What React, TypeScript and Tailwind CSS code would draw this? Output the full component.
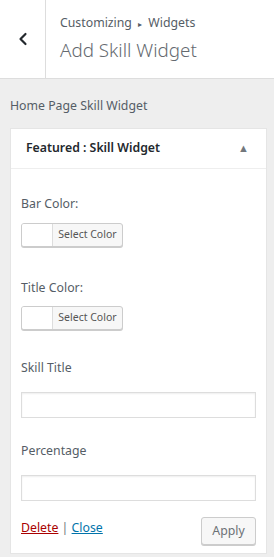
import { ChevronLeft } from "lucide-react";

function ColorButton() {
  return (
    <div className="flex h-[24px] w-[102px] rounded-[3px] border border-[#ccc] bg-[#f7f7f7] shadow-[0_1px_0_#ccc] overflow-hidden">
      <span className="w-[31px] bg-white border-r border-[#ddd]" />
      <span className="flex-1 flex items-center justify-center text-[10.5px] text-[#555]">
        Select Color
      </span>
    </div>
  );
}

export default function App() {
  return (
    <div
      className="w-[274px] h-[557px] bg-[#eee] overflow-hidden text-[#555d66]"
      style={{ fontFamily: '"Noto Sans", "Open Sans", sans-serif' }}
    >
      {/* Header */}
      <div className="h-[79px] bg-white border-b border-[#ddd] flex">
        <div className="w-[46px] border-r border-[#ddd] flex items-center justify-center">
          <ChevronLeft size={20} strokeWidth={2.6} color="#23282d" />
        </div>
        <div className="pl-[14px] pt-[14px]">
          <p className="text-[12.3px] leading-[18px]">
            Customizing <span className="text-[8px] align-middle mx-[3px]">▸</span> Widgets
          </p>
          <h1 className="text-[18.8px] font-light leading-[28px] mt-[3px] text-[#656a70]">
            Add Skill Widget
          </h1>
        </div>
      </div>

      {/* Section */}
      <div className="pl-[10px] pr-[7px] pt-[17px]">
        <p className="text-[12.3px] leading-[20px] mb-[12px]">Home Page Skill Widget</p>

        <div className="bg-white border border-[#e5e5e5]">
          <div className="h-[40px] flex items-center justify-between px-[15px] border-b border-[#eee]">
            <span className="text-[12.3px] font-semibold text-[#23282d]">
              Featured : Skill Widget
            </span>
            <span className="text-[11px] text-[#72777c] mr-[2px]">▲</span>
          </div>

          <div className="px-[10px] pt-[25px] pb-[8px]">
            <p className="text-[12.3px] leading-[20px]">Bar Color:</p>
            <div className="mt-[9px]">
              <ColorButton />
            </div>

            <p className="text-[12.3px] leading-[20px] mt-[31px]">Title Color:</p>
            <div className="mt-[8px]">
              <ColorButton />
            </div>

            <p className="text-[12.3px] leading-[20px] mt-[28px]">Skill Title</p>
            <div className="mt-[14px] h-[26px] border border-[#ddd] shadow-[inset_0_1px_2px_rgba(0,0,0,0.07)]" />

            <p className="text-[12.3px] leading-[20px] mt-[23px]">Percentage</p>
            <div className="mt-[14px] h-[26px] border border-[#ddd] shadow-[inset_0_1px_2px_rgba(0,0,0,0.07)]" />

            <div className="flex items-start justify-between mt-[16px]">
              <p className="text-[12.3px] leading-[20px] mt-[1px]">
                <span className="text-[#a00] underline">Delete</span>
                <span className="text-[#72777c]"> | </span>
                <span className="text-[#0073aa] underline">Close</span>
              </p>
              <div className="w-[55px] h-[28px] rounded-[3px] border border-[#ccc] bg-[#f7f7f7] shadow-[0_1px_0_#ccc] flex items-center justify-center text-[12.3px] text-[#6c7176]">
                Apply
              </div>
            </div>
          </div>
        </div>
      </div>
    </div>
  );
}
